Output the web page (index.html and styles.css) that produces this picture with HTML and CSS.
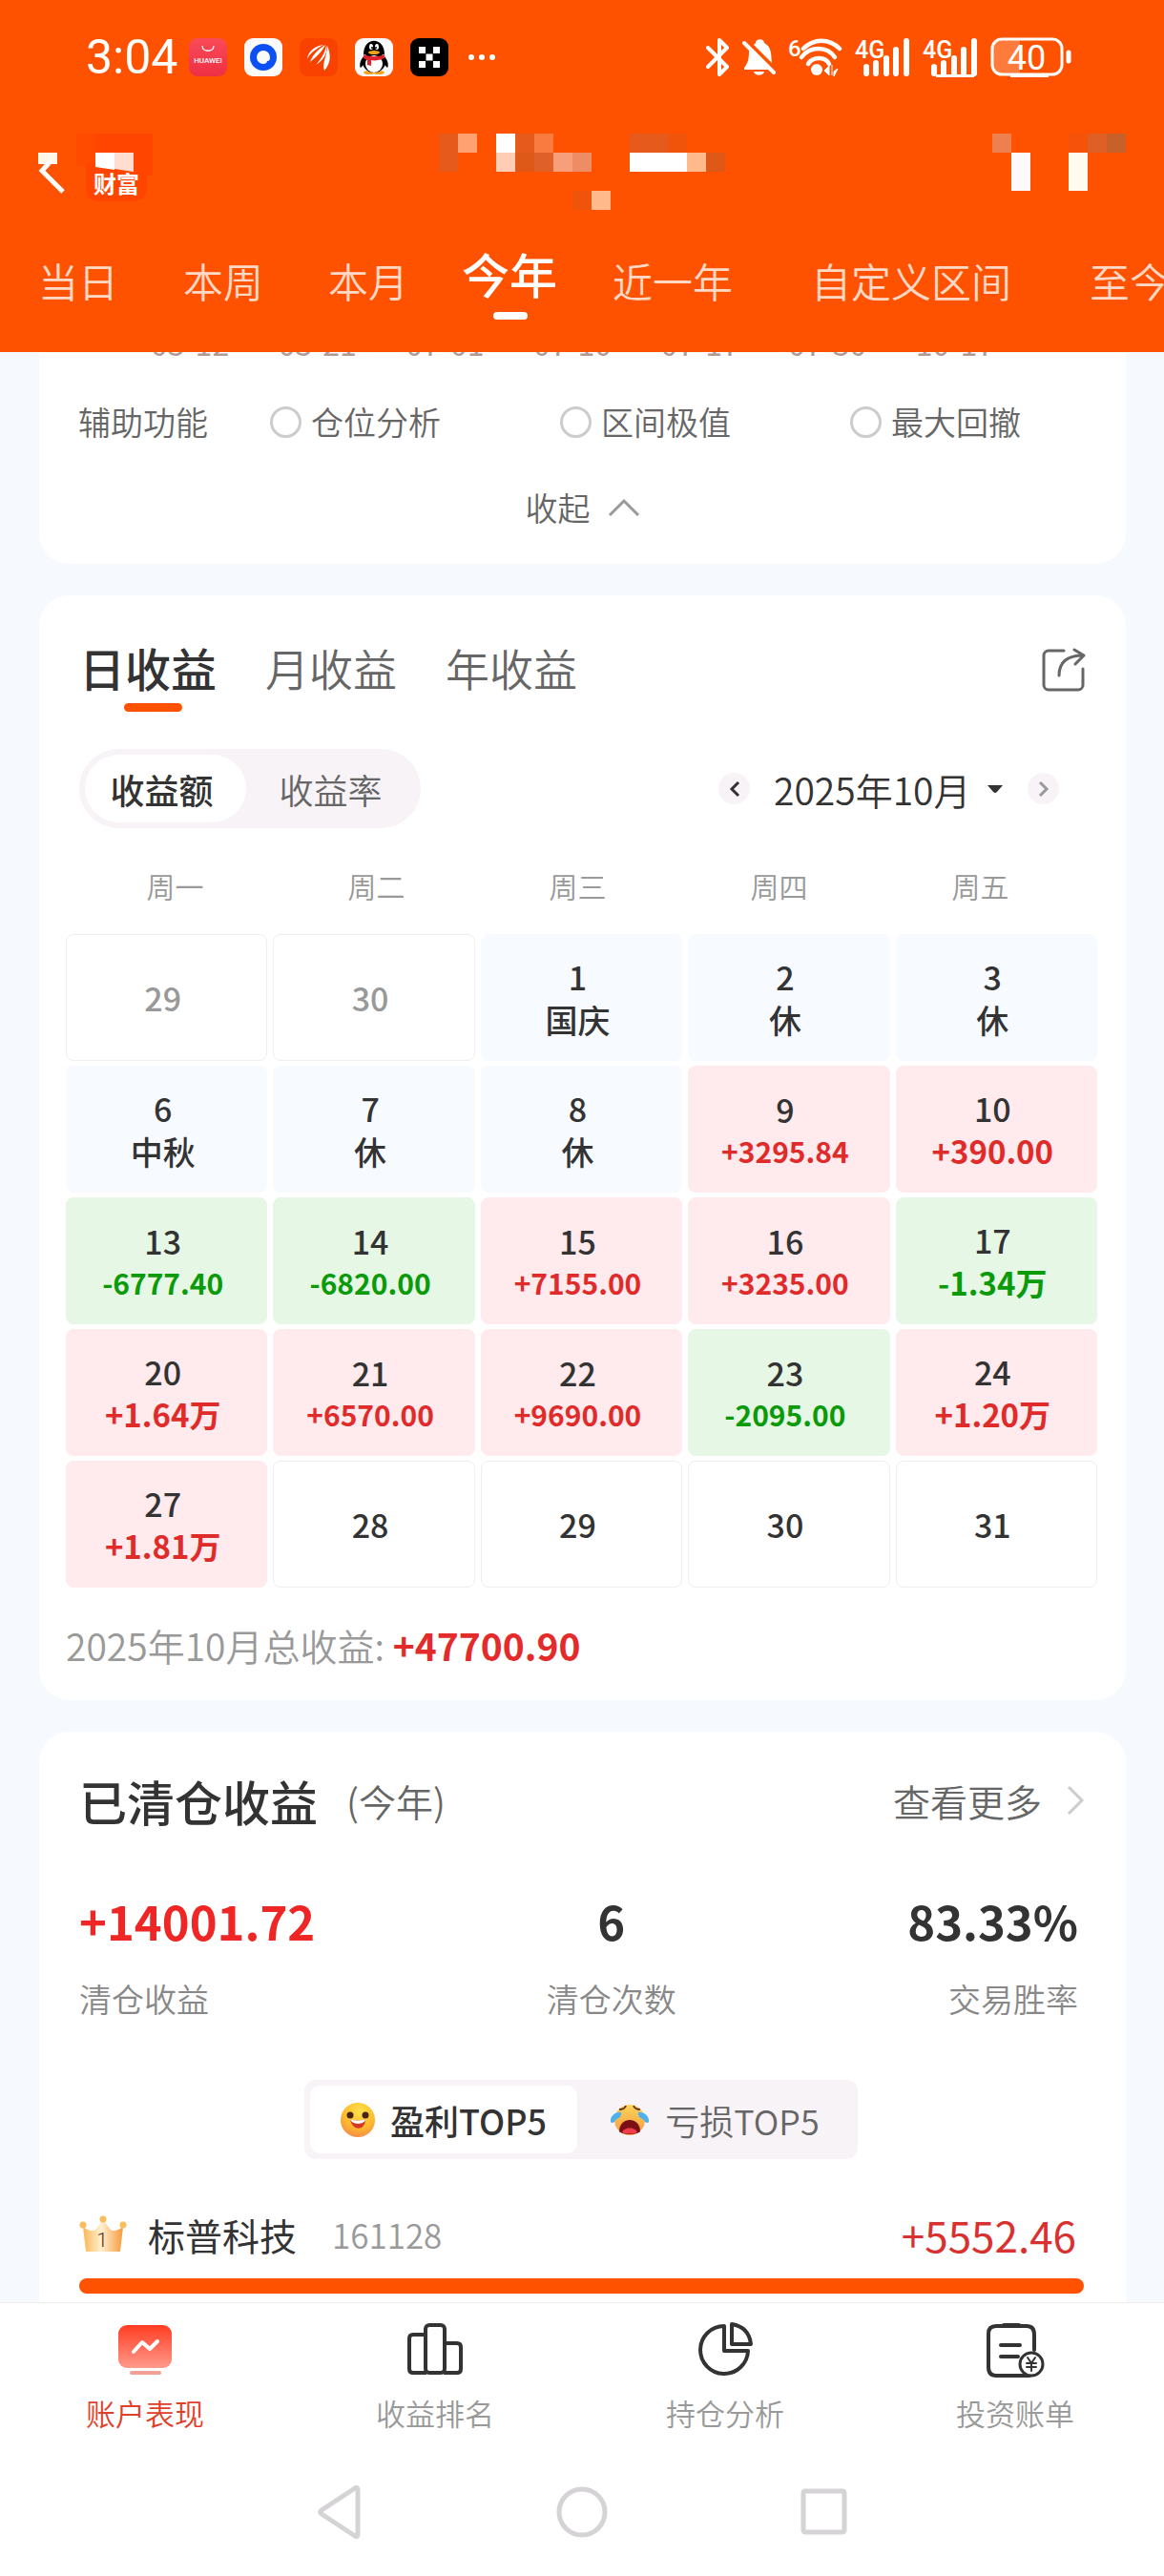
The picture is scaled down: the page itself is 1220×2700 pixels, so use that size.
FILE: index.html
```html
<!DOCTYPE html>
<html lang="zh-CN">
<head>
<meta charset="utf-8">
<meta name="viewport" content="width=device-width, initial-scale=1">
<title>账户表现</title>
<link rel="stylesheet" href="styles.css">
</head>
<body>
<header class="header">
  <div class="status">
    <span class="time">3:04</span>
    <div class="apps">
      <svg width="40" height="40" viewBox="0 0 40 40"><defs><linearGradient id="hw" x1="0" y1="0" x2="0" y2="1"><stop offset="0" stop-color="#fa4a58"/><stop offset="1" stop-color="#ee2f45"/></linearGradient></defs><rect width="40" height="40" rx="9" fill="url(#hw)"/><path d="M14 8c0 7 12 7 12 0" fill="none" stroke="#fff" stroke-width="1.3"/><text x="20" y="26" font-size="8" font-weight="500" text-anchor="middle" fill="#fff" class="mini">HUAWEI</text></svg>
      <svg width="40" height="40" viewBox="0 0 40 40"><rect width="40" height="40" rx="9" fill="#fafafa"/><circle cx="20" cy="20" r="14" fill="#0a50f5"/><path d="M20 13a7 7 0 0 1 7 7c0 3-1 4-3 4 0 2-2 3-4 3a7 7 0 0 1 0-14z" fill="#fafafa"/></svg>
      <svg width="40" height="40" viewBox="0 0 40 40"><rect width="40" height="40" rx="9" fill="#fa4200"/><g fill="#fff"><path d="M8 22C9 13 17 8 25 7c-7 4-14 8-17 15z"/><path d="M11 25C14 16 21 11 27 7c-3 7-10 13-16 18z"/><path d="M17 28C23 21 27 15 28 7c2 9-4 17-11 21z"/><path d="M26 34c-3-8 3-15 3-26 4 9 4 18-3 26z"/></g></svg>
      <svg width="40" height="40" viewBox="0 0 40 40"><rect width="40" height="40" rx="9" fill="#fafafa"/><ellipse cx="15" cy="36" rx="6" ry="2" fill="#f3a41d"/><ellipse cx="25" cy="36" rx="6" ry="2" fill="#f3a41d"/><path d="M10 18C4 24 5 30 6 31l4-4zM30 18c6 6 5 12 4 13l-4-4z"/><ellipse cx="20" cy="25" rx="12" ry="11"/><ellipse cx="20" cy="27" rx="9" ry="9" fill="#fff"/><path d="M9 17c0-19 22-19 22 0z"/><path d="M9 17c7 3 15 3 22 0v4c-5 2-10 3-14 2v6l-4-1v-5l-4-2z" fill="#e1202c"/><ellipse cx="20" cy="15" rx="6" ry="2" fill="#f3a41d"/><ellipse cx="17" cy="9" rx="2" ry="3" fill="#fff"/><ellipse cx="23" cy="9" rx="2" ry="3" fill="#fff"/><circle cx="18" cy="10" r="1"/><circle cx="22" cy="10" r="1"/></svg>
      <svg width="40" height="40" viewBox="0 0 40 40"><rect width="40" height="40" rx="9"/><path fill="#fff" d="M9 9h7v7H9zM24 9h7v7h-7zM16.500 16.500h7v7h-7zM9 24h7v7H9zM24 24h7v7h-7z"/></svg>
      <svg width="32" height="40" viewBox="0 0 32 40" fill="#fff"><circle cx="6" cy="20" r="3"/><circle cx="17" cy="20" r="3"/><circle cx="28" cy="20" r="3"/></svg>
    </div>
    <div class="signals">
      <svg width="25" height="42" viewBox="0 0 25 42" fill="none" stroke="#fff" stroke-width="4" stroke-linecap="round" stroke-linejoin="round"><path d="M2 11l20 20-8 8V3l8 8L2 31"/></svg>
      <svg width="35" height="42" viewBox="0 0 35 42"><path d="M7 14c0 9-1 13-5 18v2h25L9 12zM12 8l19 19c-1-9 0-17-8-21 0-5-9-5-9 0zM12 36h11c-1 5-10 5-11 0z" fill="#fff"/><path d="M2 6l31 31" stroke="#fff" stroke-width="4" stroke-linecap="round"/></svg>
      <svg width="57" height="42" viewBox="0 0 57 42"><text x="0" y="20" font-size="24" font-weight="500" fill="#fff" class="mini">6</text><g fill="none" stroke="#fff" stroke-width="4.500" stroke-linecap="round"><path d="M16 12c11-11 27-11 38 0"/><path d="M14 21c9-12 27-12 35 0"/><path d="M21 28c5-8 18-8 22 0"/></g><circle cx="30" cy="34" r="6" fill="#fff"/><path d="M38 35l5-5v10zM46 29v11M52 33l-4 3v5z" fill="#fff" stroke="#fff" stroke-width="1"/></svg>
      <svg width="58" height="42" viewBox="0 0 58 42"><text x="0" y="22" font-size="25" font-weight="500" fill="#fff" class="mini">4G</text><path d="M12 31v7M22 27v11M33 22v16M43 13v25M54 4v34" stroke="#fff" stroke-width="6" stroke-linecap="round"/></svg>
      <svg width="58" height="42" viewBox="0 0 58 42"><text x="0" y="22" font-size="25" font-weight="500" fill="#fff" class="mini">4G</text><path d="M12 31v7M22 27v11M33 22v16M43 13v25M54 4v34" stroke="#fff" stroke-width="6" stroke-linecap="round"/><path d="M14 39h40v3H14z" fill="#fff"/></svg>
      <svg width="86" height="44" viewBox="0 0 86 44"><path d="M2 12C2 5 6 2 12 2h19v38H10c-5 0-8-4-8-9z" fill="#ff7b3c"/><rect x="2" y="3" width="73" height="37" rx="10" fill="none" stroke="#fff" stroke-width="3"/><path d="M21 39h40v4H21z" fill="#fff"/><path d="M82 17v9" stroke="#fff" stroke-width="5" stroke-linecap="round"/><text x="38" y="35" font-size="36" text-anchor="middle" fill="#fff" class="mini level">40</text></svg>
    </div>
  </div>
  <div class="topbar">
    <button class="back" aria-label="返回">
      <svg width="140" height="80" viewBox="0 0 140 80"><path d="M40 0h20v34H40z" fill="#ff4b00"/><path d="M60 0h60v44H60z" fill="#ff4500"/><path d="M50 30h64v27c0 9-6 14-14 14H64c-8 0-14-5-14-14z" fill="#ff4500"/><path d="M0 20h20v12H0z" fill="#fff8e8"/><path d="M13 29L4 39l22 22" fill="none" stroke="#fff" stroke-width="5"/><path d="M60 20h20v18l-20-3z" fill="#fff"/><path d="M80 20h20v20l-20-3z" fill="#ffddd0"/><text x="58" y="62" font-size="24" font-weight="700" fill="#fff" class="brand">财富</text></svg>
    </button>
    <svg width="300" height="80" viewBox="0 0 300 80" shape-rendering="crispEdges"><path d="M0 0h20v40H0zM80 0h20v20H80zM200 0h40v20h-40z" fill="#e65a1c"/><path d="M20 0h20v20H20z" fill="#ffa170"/><path d="M60 0h20v20H60zM200 20h60v20h-60z" fill="#fff"/><path d="M100 0h20v20h-20z" fill="#fa7b40"/><path d="M60 20h20v20H60z" fill="#ffcdb5"/><path d="M80 20h20v20H80zM280 20h20v20h-20z" fill="#de5818"/><path d="M100 20h20v20h-20z" fill="#e0602a"/><path d="M120 20h20v20h-20z" fill="#f79e7a"/><path d="M140 20h20v20h-20z" fill="#ee8d65"/><path d="M240 0h20v20h-20zM140 60h20v20h-20z" fill="#f0540a"/><path d="M260 20h20v20h-20zM160 60h20v20h-20z" fill="#ffb98a"/></svg>
    <svg width="140" height="80" viewBox="0 0 140 80" shape-rendering="crispEdges"><path d="M0 0h20v20H0z" fill="#ee8050"/><path d="M20 20h20v40H20z" fill="#fffafa"/><path d="M80 20h20v40H80z" fill="#fffbef"/><path d="M80 0h20v20H80z" fill="#f5520a"/><path d="M100 0h20v20h-20z" fill="#de6024"/><path d="M120 0h20v20h-20z" fill="#c8602a"/></svg>
  </div>
  <nav class="periods">
    <button>当日</button><button>本周</button><button>本月</button><button class="active">今年</button><button>近一年</button><button class="custom">自定义区间</button><button>至今</button>
  </nav>
</header>

<main class="main">
  <section class="card chart">
    <div class="dates"><span>03-12</span><span>03-21</span><span>07-01</span><span>07-10</span><span>07-17</span><span>07-30</span><span>10-17</span></div>
    <fieldset class="assist">
      <legend>辅助功能</legend>
      <label><input type="radio" name="assist">仓位分析</label>
      <label><input type="radio" name="assist">区间极值</label>
      <label><input type="radio" name="assist">最大回撤</label>
    </fieldset>
    <button class="fold">收起<svg width="34" height="20" viewBox="0 0 34 20"><path d="M2 18L17 3l15 15" fill="none" stroke="#999" stroke-width="3"/></svg></button>
  </section>

  <section class="card calendar">
    <div class="cal-head">
      <nav class="cal-tabs"><button class="active">日收益</button><button>月收益</button><button>年收益</button></nav>
      <button class="share" aria-label="分享"><svg width="46" height="46" viewBox="0 0 46 46" fill="none" stroke="#666" stroke-width="3" stroke-linecap="round" stroke-linejoin="round"><path d="M23 3H7a5 5 0 0 0-5 5v31a5 5 0 0 0 5 5h31a5 5 0 0 0 5-5V22"/><path d="M18 29C18 15 27 8 43 8M34 2l10 6-9 9"/></svg></button>
    </div>
    <div class="cal-tools">
      <div class="pill"><button class="active">收益额</button><button>收益率</button></div>
      <div class="month">
        <button class="step" aria-label="上个月"><svg width="12" height="18" viewBox="0 0 12 18"><path d="M10 2L3 9l7 7" fill="none" stroke="#333" stroke-width="3"/></svg></button>
        <div class="pick"><select aria-label="月份"><option>2025年10月</option></select><svg width="18" height="10" viewBox="0 0 18 10"><path d="M1 1h16L11 8q-2 2-4 0z" fill="#333"/></svg></div>
        <button class="step" aria-label="下个月"><svg width="12" height="18" viewBox="0 0 12 18"><path d="M2 2l7 7-7 7" fill="none" stroke="#999" stroke-width="3"/></svg></button>
      </div>
    </div>
    <table class="grid">
      <thead><tr><th>周一</th><th>周二</th><th>周三</th><th>周四</th><th>周五</th></tr></thead>
      <tbody>
        <tr><td class="out"><b>29</b></td><td class="out"><b>30</b></td><td class="rest"><b>1</b><i>国庆</i></td><td class="rest"><b>2</b><i>休</i></td><td class="rest"><b>3</b><i>休</i></td></tr>
        <tr><td class="rest"><b>6</b><i>中秋</i></td><td class="rest"><b>7</b><i>休</i></td><td class="rest"><b>8</b><i>休</i></td><td class="up"><b>9</b><i class="long">+3295.84</i></td><td class="up"><b>10</b><i>+390.00</i></td></tr>
        <tr><td class="down"><b>13</b><i class="long">-6777.40</i></td><td class="down"><b>14</b><i class="long">-6820.00</i></td><td class="up"><b>15</b><i class="long">+7155.00</i></td><td class="up"><b>16</b><i class="long">+3235.00</i></td><td class="down"><b>17</b><i>-1.34万</i></td></tr>
        <tr><td class="up"><b>20</b><i>+1.64万</i></td><td class="up"><b>21</b><i class="long">+6570.00</i></td><td class="up"><b>22</b><i class="long">+9690.00</i></td><td class="down"><b>23</b><i class="long">-2095.00</i></td><td class="up"><b>24</b><i>+1.20万</i></td></tr>
        <tr><td class="up"><b>27</b><i>+1.81万</i></td><td><b>28</b></td><td><b>29</b></td><td><b>30</b></td><td><b>31</b></td></tr>
      </tbody>
    </table>
    <p class="total">2025年10月总收益: <strong>+47700.90</strong></p>
  </section>

  <section class="card closed">
    <div class="closed-head">
      <h2>已清仓收益</h2><span>(今年)</span>
      <a href="#more">查看更多<svg width="20" height="32" viewBox="0 0 20 32"><path d="M2 2l14 14L2 30" fill="none" stroke="#ccc" stroke-width="3"/></svg></a>
    </div>
    <dl class="stats">
      <div><dt>清仓收益</dt><dd class="gain">+14001.72</dd></div>
      <div><dt>清仓次数</dt><dd>6</dd></div>
      <div><dt>交易胜率</dt><dd>83.33%</dd></div>
    </dl>
    <div class="top5">
      <button class="active"><svg width="36" height="36" viewBox="0 0 36 36"><defs><radialGradient id="sm" cx=".55" cy=".25" r=".8"><stop offset="0" stop-color="#ffe14a"/><stop offset=".6" stop-color="#fdb92c"/><stop offset="1" stop-color="#f5874f"/></radialGradient></defs><circle cx="18" cy="18" r="18" fill="url(#sm)"/><circle cx="10" cy="13" r="3.500" fill="#4a2412"/><circle cx="26" cy="13" r="3.500" fill="#4a2412"/><path d="M10 17c5 2 11 2 16 0 0 13-14 13-16 0z" fill="#d8352b"/><path d="M10 17c5 2 11 2 16 0 0 6-14 7-16 0z" fill="#fff"/></svg>盈利TOP5</button>
      <button><svg width="42" height="36" viewBox="0 0 42 36"><defs><linearGradient id="cr" x1="0" y1="0" x2="0" y2="1"><stop offset="0" stop-color="#ffd45a"/><stop offset="1" stop-color="#f39a3d"/></linearGradient></defs><circle cx="21" cy="18" r="16" fill="url(#cr)"/><path d="M10 7c3 0 6-1 7-4M32 7c-3 0-6-1-7-4" stroke="#6b3a1c" stroke-width="2" fill="none"/><path d="M10 30c0-16 22-16 22 0-3 4-19 4-22 0z" fill="#7c0f16"/><path d="M13 31c2-6 14-6 16 0-4 2-12 2-16 0z" fill="#ee3d4b"/><path d="M12 10C8 9 0 13 1 20c2 3 5-1 6-3 3 0 6-4 5-7zM30 10c4-1 12 3 11 10-2 3-5-1-6-3-3 0-6-4-5-7z" fill="#4fb0ee"/></svg>亏损TOP5</button>
    </div>
    <div class="holding">
      <svg width="50" height="40" viewBox="0 0 50 40"><defs><linearGradient id="cw"><stop offset="0" stop-color="#fbb556"/><stop offset=".45" stop-color="#fff0cf"/><stop offset="1" stop-color="#f79a3c"/></linearGradient></defs><path d="M4 12q8 6 13 3l8-10 8 10q5 3 13-3l-3 26H7z" fill="url(#cw)"/><g fill="#fbbc5c"><circle cx="4" cy="10" r="3.500"/><circle cx="25" cy="4" r="3.500"/><circle cx="46" cy="10" r="3.500"/></g><text x="24" y="33" font-size="21" text-anchor="middle" fill="#5a2a18" class="mini">1</text></svg>
      <span class="name">标普科技</span><span class="code">161128</span><span class="amount">+5552.46</span>
    </div>
    <div class="bar"></div>
  </section>
</main>

<footer class="footer">
  <nav class="tabs">
    <a href="#perf" class="active"><svg width="62" height="60" viewBox="0 0 62 60"><defs><linearGradient id="pf" x1="0" y1="0" x2="0" y2="1"><stop offset="0" stop-color="#ff3c22"/><stop offset="1" stop-color="#ff9a8c"/></linearGradient></defs><rect x="3" y="4" width="56" height="45" rx="9" fill="url(#pf)"/><path d="M19 32l9-10 8 7 8-8" fill="none" stroke="#fff" stroke-width="4" stroke-linecap="round" stroke-linejoin="round"/><rect x="15" y="52" width="33" height="4" rx="2" fill="#f2a094"/></svg>账户表现</a>
    <a href="#rank"><svg width="62" height="60" viewBox="0 0 62 60" fill="none" stroke="#333" stroke-width="4"><path d="M21 14H8q-4 0-4 4v32q0 4 4 4h14"/><rect x="21" y="4" width="20" height="50" rx="4"/><path d="M41 23h13q4 0 4 4v23q0 4-4 4H40"/></svg>收益排名</a>
    <a href="#position"><svg width="62" height="60" viewBox="0 0 62 60" fill="none" stroke="#333" stroke-width="4" stroke-linejoin="round"><path d="M30 5v26h25a25 25 0 1 1-25-26z"/><path d="M38 3q18 3 20 21H38z"/></svg>持仓分析</a>
    <a href="#bill"><svg width="62" height="60" viewBox="0 0 62 60" fill="none" stroke="#333" stroke-width="4" stroke-linecap="round"><path d="M51 30V14q0-9-8-9H11q-8 0-8 8v35q0 9 8 9h35"/><path d="M19 4h16M16 25h20M16 37h18"/><circle cx="48" cy="45" r="12" fill="#fff" stroke-width="3"/><path d="M44 38l4 6 4-6M48 44v8M43 44h10M43 48h10" stroke-width="2"/></svg>投资账单</a>
  </nav>
  <div class="system">
    <button aria-label="返回"><svg width="52" height="56" viewBox="0 0 52 56"><path d="M45 5v46q0 4-3 2L7 30q-3-2 0-4L42 3q3-2 3 2z" fill="none" stroke="#d6d3d6" stroke-width="5"/></svg></button>
    <button aria-label="主页"><svg width="56" height="56" viewBox="0 0 56 56"><circle cx="28" cy="28" r="24" fill="none" stroke="#d6d3d6" stroke-width="5"/></svg></button>
    <button aria-label="最近任务"><svg width="52" height="56" viewBox="0 0 52 56"><rect x="4" y="6" width="43" height="43" rx="2" fill="none" stroke="#d6d3d6" stroke-width="5"/></svg></button>
  </div>
</footer>
</body>
</html>
```
FILE: styles.css
```css
* { box-sizing: border-box; }

body {
  margin: 0;
  background: #fff;
  color: #333;
  font-family: "Noto Sans CJK SC", sans-serif;
  font-size: 34px;
  font-weight: 350;
  line-height: 50px;
  overflow-x: hidden;
}

button, select {
  margin: 0;
  padding: 0;
  border: 0;
  background: none;
  color: inherit;
  font: inherit;
  white-space: nowrap;
}

svg { display: block; flex: none; }
a { color: inherit; text-decoration: none; }
h2, p, dl, dd { margin: 0; }
.mini { font-family: Roboto, sans-serif; }
.level { font-weight: 400; }
.brand { font-family: "Noto Sans CJK SC", sans-serif; }

/* Header */
.header { background: #ff5200; color: #fff; overflow: hidden; }

.status {
  display: flex;
  align-items: center;
  height: 120px;
  padding: 0 96px 0 90px;
}
.time {
  width: 108px;
  font-family: Roboto, sans-serif;
  font-size: 50px;
  font-weight: 400;
}
.apps { display: flex; gap: 18px; }
.signals { display: flex; align-items: center; gap: 13px; margin-left: auto; }

.topbar {
  display: flex;
  justify-content: space-between;
  padding: 20px 40px 0;
}

.periods {
  display: flex;
  height: 149px;
  padding-left: 6px;
}
.periods button {
  flex: none;
  padding: 0 34px 2px;
  color: #ffd9c6;
  font-size: 42px;
}
.periods .active {
  position: relative;
  padding: 0 24px 18px 22px;
  color: #fff;
  font-size: 50px;
  font-weight: 500;
}
.periods .active::after {
  content: "";
  position: absolute;
  bottom: 34px;
  left: 50%;
  width: 36px;
  height: 8px;
  margin-left: -18px;
  border-radius: 4px;
  background: #fff;
}
.periods .custom { padding: 0 48px 2px; }

/* Cards */
.main {
  display: flex;
  flex-direction: column;
  gap: 33px;
  padding: 0 40px 0 41px;
  background: #f6faff;
}
.card { border-radius: 32px; background: #fff; }

.chart { border-radius: 0 0 32px 32px; padding-bottom: 34px; }
.dates {
  display: flex;
  justify-content: space-between;
  align-items: flex-end;
  height: 4px;
  padding: 0 138px 0 117px;
  overflow: hidden;
  color: #b09a94;
  font-size: 32px;
  font-weight: 400;
  line-height: 28px;
}
.assist {
  display: flex;
  gap: 125px;
  margin: 44px 0 0;
  padding: 0 0 0 41px;
  border: 0;
  color: #666;
}
.assist legend { float: left; width: 76px; padding: 0; white-space: nowrap; }
.assist label { display: flex; align-items: center; gap: 10px; white-space: nowrap; }
.assist input {
  appearance: none;
  width: 33px;
  height: 33px;
  margin: 0;
  border: 3px solid #ccc;
  border-radius: 50%;
}
.fold {
  display: flex;
  align-items: center;
  gap: 18px;
  margin: 40px auto 0;
  color: #666;
}

/* Calendar */
.calendar { padding: 40px 30px 32px 28px; }
.cal-head {
  display: flex;
  justify-content: space-between;
  align-items: center;
  padding: 0 12px 0 14px;
}
.cal-tabs { display: flex; gap: 51px; line-height: 70px; }
.cal-tabs button { color: #666; font-size: 46px; line-height: 70px; }
.cal-tabs .active {
  position: relative;
  color: #333;
  font-size: 48px;
  font-weight: 500;
}
.cal-tabs .active::after {
  content: "";
  position: absolute;
  bottom: -12px;
  left: 47px;
  width: 61px;
  height: 9px;
  border-radius: 5px;
  background: #ff5200;
}
.share { padding-top: 6px; }

.cal-tools {
  display: flex;
  justify-content: space-between;
  align-items: center;
  margin-top: 51px;
  padding: 0 40px 0 14px;
}
.pill {
  display: flex;
  padding: 6px;
  border-radius: 42px;
  background: #f7f3f7;
}
.pill button {
  width: 169px;
  height: 71px;
  border-radius: 36px;
  color: #666;
  font-size: 36px;
}
.pill button + button { width: 177px; }
.pill .active { padding-right: 8px; background: #fff; color: #333; font-weight: 500; }
.month { display: flex; align-items: center; gap: 25px; }
.pick { display: flex; align-items: center; gap: 16px; }
.pick select { appearance: none; font-size: 39px; }
.step {
  display: flex;
  justify-content: center;
  align-items: center;
  width: 33px;
  height: 33px;
  border-radius: 50%;
  background: #f7f3f7;
}

.grid { display: block; margin-top: 35px; }
.grid thead, .grid tbody { display: block; }
.grid tr { display: grid; grid-template-columns: repeat(5, 1fr); }
.grid th {
  padding: 0;
  color: #999;
  font-size: 30px;
  font-weight: 350;
  text-align: center;
}
.grid thead { padding: 0 17px 0 9px; }
.grid tbody { display: grid; gap: 5px; margin-top: 26px; }
.grid tbody tr { gap: 6px; }
.grid td {
  display: flex;
  flex-direction: column;
  justify-content: center;
  align-items: center;
  height: 133px;
  padding: 0 8px 0 0;
  border: 1px solid #eee;
  border-radius: 8px;
  font-weight: 500;
}
.grid b, .grid i {
  font-style: normal;
  font-weight: 500;
  line-height: 45px;
}
.grid .out { color: #999; }
.grid .rest { border-color: #f7faff; background: #f7faff; }
.grid .up { border-color: #ffeaed; background: #ffeaed; }
.grid .down { border-color: #e6f7e6; background: #e6f7e6; }
.grid .up i, .grid .down i { font-size: 33px; font-weight: 700; }
.grid .up i { color: #e02b2b; }
.grid .down i { color: #0a9a0a; }
.grid td .long.long { font-size: 30px; line-height: 42px; }

.total { margin-top: 34px; color: #999; font-size: 39px; line-height: 52px; }
.total strong { color: #e32b2b; font-size: 39px; font-weight: 700; }

/* Closed positions */
.closed { padding: 37px 42px 9px; border-radius: 32px 32px 0 0; }
.closed-head { display: flex; align-items: center; color: #666; font-size: 39px; line-height: 70px; }
.closed-head h2 { margin-right: 30px; color: #333; font-size: 50px; font-weight: 500; }
.closed-head a { display: flex; align-items: center; gap: 26px; margin-left: auto; }

.stats { display: flex; justify-content: space-between; margin-top: 57px; padding-right: 8px; }
.stats div { display: flex; flex-direction: column-reverse; gap: 23px; align-items: center; }
.stats div:first-child { align-items: flex-start; }
.stats div:last-child { align-items: flex-end; }
.stats dt { color: #888; }
.stats dd { font-size: 49px; font-weight: 700; line-height: 68px; }
.stats .gain { color: #ee2626; }

.top5 {
  display: flex;
  width: 580px;
  margin: 60px auto 0 236px;
  padding: 6px;
  border-radius: 12px;
  background: #f7f3f7;
}
.top5 button {
  display: flex;
  justify-content: center;
  align-items: center;
  gap: 16px;
  width: 288px;
  height: 71px;
  border-radius: 10px;
  color: #666;
  font-size: 36px;
}
.top5 .active { width: 280px; background: #fff; color: #333; font-weight: 500; }

.holding { display: flex; align-items: center; margin-top: 54px; padding-right: 10px; }
.name { margin-left: 22px; font-size: 39px; font-weight: 400; }
.code { margin-left: 37px; color: #999; font-size: 35px; }
.amount { margin-left: auto; color: #d93030; font-size: 44px; font-weight: 400; }
.bar { height: 16px; margin: 21px 2px 0 0; border-radius: 8px; background: #ff5200; }

/* Bottom navigation */
.footer { border-top: 1px solid #eee; background: #fff; }
.tabs { display: grid; grid-template-columns: repeat(4, 1fr); padding: 19px 4px 0 0; }
.tabs a {
  display: flex;
  flex-direction: column;
  align-items: center;
  gap: 11px;
  color: #999;
  font-size: 31px;
}
.tabs .active { color: #e0402a; }
.system {
  display: flex;
  justify-content: center;
  gap: 200px;
  padding: 51px 0 38px;
}
```
